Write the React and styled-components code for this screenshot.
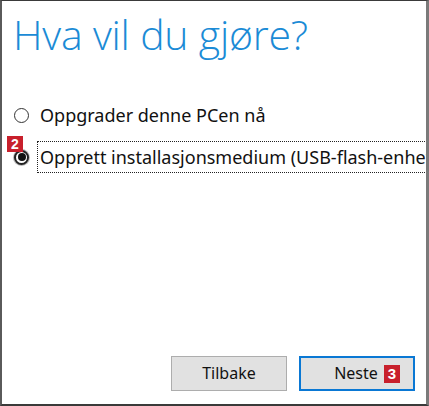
import styled, { createGlobalStyle } from 'styled-components'

const GlobalStyle = createGlobalStyle`
  html, body {
    margin: 0;
    padding: 0;
    background: #fff;
  }
  body {
    font-family: 'Noto Sans', 'Open Sans', sans-serif;
  }
`

export default function App() {
  return (
    <>
      <GlobalStyle />
      <Dialog>
        <Title>Hva vil du gjøre?</Title>
        <Options>
          <Option>
            <Radio />
            <Label>Oppgrader denne PCen nå</Label>
          </Option>
          <Option>
            <Radio checked />
            <Label focused>Opprett installasjonsmedium (USB-flash-enhet, DVD eller ISO-fil) for en annen PC</Label>
            <Badge>2</Badge>
          </Option>
        </Options>
        <Footer>
          <Button>Tilbake</Button>
          <Button primary>
            Neste <InlineBadge>3</InlineBadge>
          </Button>
        </Footer>
      </Dialog>
    </>
  )
}

const Dialog = styled.div`
  width: 429px;
  height: 406px;
  box-sizing: border-box;
  border-top: 1px solid #3a3a3a;
  border-left: 2px solid #5a5a5a;
  border-right: 3px solid #7a7a7a;
  border-bottom: 2px solid #3a3a3a;
  background: #fff;
  display: flex;
  flex-direction: column;
  overflow: hidden;
`

const Title = styled.h1`
  margin: 6px 0 0 11px;
  font-family: 'Open Sans', 'Noto Sans', sans-serif;
  font-weight: 300;
  font-size: 41px;
  line-height: 54px;
  color: #1b8bd6;
  letter-spacing: -0.2px;
`

const Options = styled.div`
  margin-top: 39px;
  display: flex;
  flex-direction: column;
  gap: 12px;
`

const Option = styled.div`
  position: relative;
  display: flex;
  align-items: center;
  padding-left: 12px;
  height: 30px;
  white-space: nowrap;
`

const Radio = styled.span`
  flex: none;
  width: 15px;
  height: 15px;
  border-radius: 50%;
  border: ${({ checked }) => (checked ? '2px solid #222' : '1.5px solid #333')};
  background: #fff;
  box-sizing: border-box;
  margin-right: 11px;
  position: relative;
  box-shadow: ${({ checked }) => (checked ? '0 0 0 1px #bbb' : 'none')};

  &::after {
    content: '';
    display: ${({ checked }) => (checked ? 'block' : 'none')};
    position: absolute;
    inset: 1.5px;
    border-radius: 50%;
    background: #111;
  }
`

const Label = styled.span`
  font-size: 18px;
  color: #111;
  padding: 3px 2px;
  border: 1px dotted ${({ focused }) => (focused ? '#222' : 'transparent')};
  margin-left: -3px;
`

const Badge = styled.span`
  position: absolute;
  left: 5px;
  top: -6px;
  width: 16px;
  height: 16px;
  background: #c8202c;
  color: #fff;
  font-family: 'Liberation Sans', Arial, sans-serif;
  font-weight: 700;
  font-size: 14px;
  line-height: 16px;
  text-align: center;
`

const Footer = styled.div`
  margin-top: auto;
  margin-bottom: 13px;
  display: flex;
  justify-content: flex-end;
  gap: 12px;
  padding-right: 11px;
`

const Button = styled.button`
  width: 116px;
  height: 35px;
  box-sizing: border-box;
  background: #e1e1e1;
  border: ${({ primary }) => (primary ? '2px solid #0a78d4' : '1px solid #adadad')};
  font-family: 'Noto Sans', sans-serif;
  font-size: 16px;
  color: #111;
  padding: 0 0 2px;
  display: flex;
  align-items: center;
  justify-content: center;
  gap: 6px;
  ${({ primary }) => primary && 'padding-left: 20px;'}
`

const InlineBadge = styled.span`
  display: inline-block;
  width: 16px;
  height: 18px;
  background: #c8202c;
  color: #fff;
  font-family: 'Liberation Sans', Arial, sans-serif;
  font-weight: 700;
  font-size: 15px;
  line-height: 18px;
  text-align: center;
  margin-top: 2px;
`
